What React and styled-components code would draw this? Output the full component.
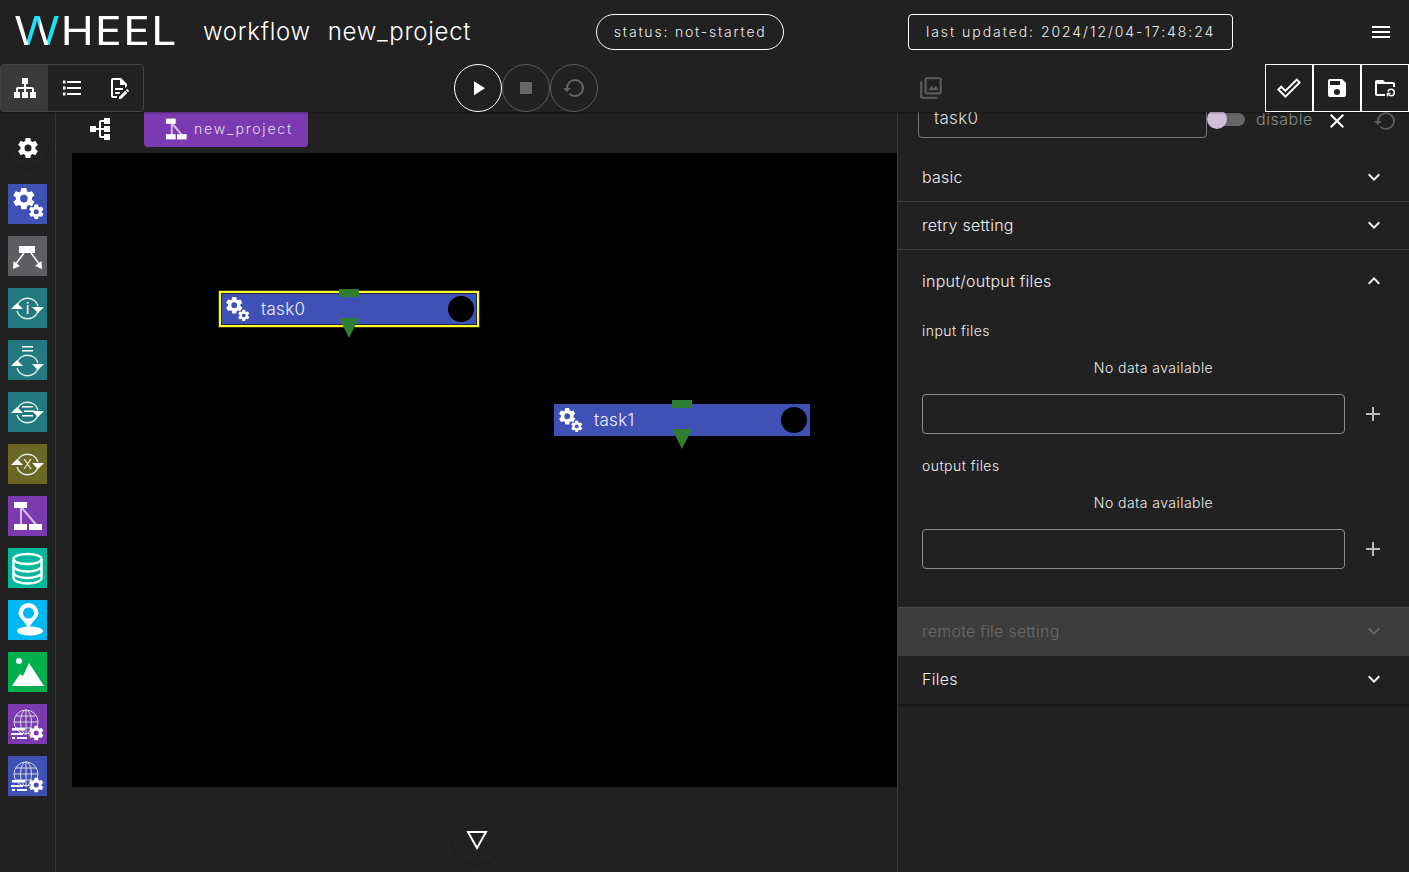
import React from 'react';
import styled, { createGlobalStyle } from 'styled-components';

const paths = {
  sitemap: 'M9,2V8H11V11H5C3.89,11 3,11.89 3,13V16H1V22H7V16H5V13H11V16H9V22H15V16H13V13H19V16H17V22H23V16H21V13C21,11.89 20.11,11 19,11H13V8H15V2H9Z',
  list: 'M7,5H21V7H7V5M7,13V11H21V13H7M3,4.5H5.5V7.5H3V4.5M3,10.5H5.5V13.5H3V10.5M7,19V17H21V19H7M3,16.5H5.5V19.5H3V16.5Z',
  fileEdit: 'M8,12H16V14H8V12M10,20H6V4H13V9H18V12.1L20,10.1V8L14,2H6A2,2 0 0,0 4,4V20A2,2 0 0,0 6,22H10V20M8,18H12.1L13,17.1V16H8V18M20.2,13C20.3,13 20.5,13.1 20.6,13.2L21.9,14.5C22.1,14.7 22.1,15.1 21.9,15.3L20.9,16.3L18.8,14.2L19.8,13.2C19.9,13.1 20,13 20.2,13M20.2,16.9L14.1,23H12V20.9L18.1,14.8L20.2,16.9Z',
  play: 'M8,5.14V19.14L19,12.14L8,5.14Z',
  stop: 'M18,18H6V6H18V18Z',
  restore: 'M13,3A9,9 0 0,0 4,12H1L4.89,15.89L4.96,16.03L9,12H6A7,7 0 0,1 13,5A7,7 0 0,1 20,12A7,7 0 0,1 13,19C11.07,19 9.32,18.21 8.06,16.94L6.64,18.36C8.27,20 10.5,21 13,21A9,9 0 0,0 22,12A9,9 0 0,0 13,3Z',
  save: 'M15,9H5V5H15M12,19A3,3 0 0,1 9,16A3,3 0 0,1 12,13A3,3 0 0,1 15,16A3,3 0 0,1 12,19M17,3H5C3.89,3 3,3.9 3,5V19A2,2 0 0,0 5,21H19A2,2 0 0,0 21,19V7L17,3Z',
  images: 'M20 4v12H8V4h12m0-2H8a2 2 0 0 0-2 2v12c0 1.1.9 2 2 2h12a2 2 0 0 0 2-2V4a2 2 0 0 0-2-2zM2 6v14c0 1.1.9 2 2 2h14v-2H4V6H2zM9.5 14l3-4 2 2.5 2-2.5 2.5 4z',
  checkOutline: 'M19.78,2.2L24,6.42L8.44,22L0,13.55L4.22,9.33L8.44,13.55L19.78,2.2M19.78,5L8.44,16.36L4.22,12.17L2.81,13.55L8.44,19.17L21.19,6.42L19.78,5Z',
  folderRefresh: 'M10 4H4C2.89 4 2 4.89 2 6V18C2 19.1 2.9 20 4 20H12V18H4V8H20V11H22V8C22 6.89 21.1 6 20 6H12L10 4ZM18 12.5A4 4 0 0 0 14.2 15.3L15.7 15.8A2.5 2.5 0 0 1 18 14A2.5 2.5 0 0 1 20.5 16.5A2.5 2.5 0 0 1 18 19A2.5 2.5 0 0 1 16 18H17.5V16.8H13.8V20.5H15V19.1A4 4 0 0 0 18 20.5A4 4 0 0 0 22 16.5A4 4 0 0 0 18 12.5Z',
  close: 'M19,6.41L17.59,5L12,10.59L6.41,5L5,6.41L10.59,12L5,17.59L6.41,19L12,13.41L17.59,19L19,17.59L13.41,12L19,6.41Z',
  down: 'M7.41,8.58L12,13.17L16.59,8.58L18,10L12,16L6,10L7.41,8.58Z',
  up: 'M7.41,15.41L12,10.83L16.59,15.41L18,14L12,8L6,14L7.41,15.41Z',
  plus: 'M19,13H13V19H11V13H5V11H11V5H13V11H19V13Z',
  menu: 'M3,6H21V8H3V6M3,11H21V13H3V11M3,16H21V18H3V16Z',
  cog: 'M12,15.5A3.5,3.5 0 0,1 8.5,12A3.5,3.5 0 0,1 12,8.5A3.5,3.5 0 0,1 15.5,12A3.5,3.5 0 0,1 12,15.5M19.43,12.97C19.47,12.65 19.5,12.33 19.5,12C19.5,11.67 19.47,11.34 19.43,11L21.54,9.37C21.73,9.22 21.78,8.95 21.66,8.73L19.66,5.27C19.54,5.05 19.27,4.96 19.05,5.05L16.56,6.05C16.04,5.66 15.5,5.32 14.87,5.07L14.5,2.42C14.46,2.18 14.25,2 14,2H10C9.75,2 9.54,2.18 9.5,2.42L9.13,5.07C8.5,5.32 7.96,5.66 7.44,6.05L4.95,5.05C4.73,4.96 4.46,5.05 4.34,5.27L2.34,8.73C2.21,8.95 2.27,9.22 2.46,9.37L4.57,11C4.53,11.34 4.5,11.67 4.5,12C4.5,12.33 4.53,12.65 4.57,12.97L2.46,14.63C2.27,14.78 2.21,15.05 2.34,15.27L4.34,18.73C4.46,18.95 4.73,19.03 4.95,18.95L7.44,17.94C7.96,18.34 8.5,18.68 9.13,18.93L9.5,21.58C9.54,21.82 9.75,22 10,22H14C14.25,22 14.46,21.82 14.5,21.58L14.87,18.93C15.5,18.67 16.04,18.34 16.56,17.94L19.05,18.95C19.27,19.03 19.54,18.95 19.66,18.73L21.66,15.27C21.78,15.05 21.73,14.78 21.54,14.63L19.43,12.97Z',
};

const GlobalStyle = createGlobalStyle`
  html, body {
    margin: 0;
    background: #212121;
    overflow: hidden;
  }
  * {
    box-sizing: border-box;
  }
`;

const Page = styled.div`
  width: 1409px;
  height: 872px;
  display: flex;
  flex-direction: column;
  background: #212121;
  color: #fff;
  font-family: Inter, "Liberation Sans", sans-serif;
  overflow: hidden;
`;

const Header = styled.header`
  height: 64px;
  display: flex;
  align-items: center;
  padding-left: 14px;
`;

const Logo = styled.div`
  width: 160px;
  padding-bottom: 3px;
  font-size: 39px;
  font-weight: 400;
  letter-spacing: 1.2px;
  line-height: 1;
  white-space: nowrap;
  transform: scaleX(1.14);
  transform-origin: left;
`;

const LogoW = styled.span`
  display: inline-block;
  transform: scaleX(1.05);
  transform-origin: left;
  margin-right: 2.5px;
  letter-spacing: 0;
  color: transparent;
  background: linear-gradient(90deg, #fff 0 30%, #19e3f5 30% 56%, #fff 56% 74%, #19e3f5 74% 100%);
  -webkit-background-clip: text;
  background-clip: text;
`;

const Title = styled.span`
  font-size: 24px;
  font-weight: 300;
  letter-spacing: 0.7px;
  padding-bottom: 1px;
  margin-left: ${(p) => p.$gap}px;
`;

const Chip = styled.div`
  height: 36px;
  display: flex;
  align-items: center;
  justify-content: center;
  width: ${(p) => p.$width}px;
  margin-left: ${(p) => p.$gap}px;
  padding-bottom: 1px;
  border: 1px solid #fff;
  border-radius: ${(p) => p.$radius}px;
  font-size: 14px;
  font-weight: 300;
  letter-spacing: ${(p) => p.$spacing}px;
  color: #eee;
`;

const MenuButton = styled.div`
  margin-left: 136px;
  display: flex;
`;

const Toolbar = styled.div`
  height: 48px;
  display: flex;
  align-items: center;
  position: relative;
  z-index: 2;
  background: #212121;
  box-shadow: 0 1px 2px rgba(0, 0, 0, 0.35);
`;

const ViewGroup = styled.div`
  display: flex;
  width: 144px;
  height: 48px;
  border: 1px solid #444;
  border-radius: 4px;
  overflow: hidden;
`;

const ViewButton = styled.div`
  flex: 1;
  display: flex;
  align-items: center;
  justify-content: center;
  background: ${(p) => (p.$active ? '#3a3a3a' : 'transparent')};
`;

const RunGroup = styled.div`
  display: flex;
  margin-left: 310px;
  border-radius: 24px;
  box-shadow: 0 1px 2px rgba(0, 0, 0, 0.4);
`;

const RunButton = styled.div`
  width: 48px;
  height: 48px;
  display: flex;
  align-items: center;
  justify-content: center;
  border-radius: 50%;
  border: 1px solid ${(p) => (p.$enabled ? '#fff' : '#5a5a5a')};
  color: ${(p) => (p.$enabled ? '#fff' : '#666')};
`;

const GalleryButton = styled.div`
  display: flex;
  margin-left: 320px;
  color: #5c5c5c;
`;

const SaveGroup = styled.div`
  display: flex;
  margin-left: auto;
`;

const SaveButton = styled.div`
  width: 48px;
  height: 48px;
  display: flex;
  align-items: center;
  justify-content: center;
  border: 1px solid #fff;
`;

const Main = styled.main`
  flex: 1;
  display: flex;
  min-height: 0;
`;

const Sidebar = styled.aside`
  width: 56px;
  flex: none;
  display: flex;
  flex-direction: column;
  align-items: flex-start;
  gap: 12px;
  padding: 16px 0 0 8px;
  border-right: 1px solid #3a3a3a;
`;

const SettingsButton = styled.div`
  width: 40px;
  height: 40px;
  margin-bottom: 4px;
  display: flex;
  align-items: center;
  justify-content: center;
  border-radius: 50%;
  box-shadow: 0 1px 3px rgba(0, 0, 0, 0.2);
`;

const Tile = styled.div`
  width: 39px;
  height: 40px;
  display: flex;
  background: ${(p) => p.$bg};
`;

const Center = styled.section`
  width: 841px;
  flex: none;
  display: flex;
  flex-direction: column;
`;

const Crumbs = styled.div`
  height: 41px;
  display: flex;
  padding-left: 32px;
`;

const TreeButton = styled.div`
  width: 24px;
  height: 34px;
  display: flex;
  align-items: center;
`;

const CrumbButton = styled.div`
  width: 164px;
  height: 35px;
  margin-left: 32px;
  display: flex;
  align-items: center;
  padding: 0 0 2px 19px;
  gap: 5px;
  background: #7b3ab0;
  border-radius: 0 0 4px 4px;
  font-size: 14px;
  font-weight: 300;
  letter-spacing: 1.8px;
  color: #e6dcee;
`;

const Canvas = styled.div`
  position: relative;
  width: 825px;
  height: 634px;
  margin-left: 16px;
  background: #000;
`;

const Node = styled.div`
  position: absolute;
  left: ${(p) => p.$x}px;
  top: ${(p) => p.$y}px;
  width: 256px;
  height: 32px;
  display: flex;
  align-items: center;
  padding-left: 1px;
  background: #3f51b5;
  outline: ${(p) => (p.$selected ? '2px solid #ffff2a' : 'none')};
  box-shadow: ${(p) => (p.$selected ? '0 0 0 3px #33330c, 0 0 0 1px #1c2452 inset' : 'none')};
`;

const NodeLabel = styled.span`
  margin-left: 9px;
  font-size: 17px;
  font-weight: 300;
  letter-spacing: 0.3px;
  color: #eef;
`;

const PortTop = styled.div`
  position: absolute;
  left: 118px;
  top: -4px;
  width: 20px;
  height: 8px;
  background: #2e7d32;
`;

const PortBottom = styled.div`
  position: absolute;
  left: 118px;
  top: 25px;
  width: 0;
  height: 0;
  border-left: 10px solid transparent;
  border-right: 10px solid transparent;
  border-top: 20px solid #2e7d32;
`;

const Status = styled.div`
  position: absolute;
  right: 3px;
  top: 3px;
  width: 26px;
  height: 26px;
  border-radius: 50%;
  background: #000;
`;

const Footer = styled.div`
  flex: 1;
  display: flex;
  justify-content: center;
  padding-top: 29px;
`;

const CollapseButton = styled.div`
  width: 48px;
  height: 48px;
  display: flex;
  align-items: center;
  justify-content: center;
  border-radius: 50%;
  box-shadow: 0 1px 3px rgba(0, 0, 0, 0.2);
`;

const Panel = styled.section`
  flex: 1;
  display: flex;
  flex-direction: column;
  overflow: hidden;
  border-left: 1px solid #3a3a3a;
`;

const NameRow = styled.div`
  height: 41px;
  flex: none;
  display: flex;
  align-items: flex-end;
  padding: 0 0 15px 20px;
`;

const NameInput = styled.input`
  width: 289px;
  height: 40px;
  flex: none;
  padding: 0 15px;
  border: 1px solid #777;
  border-radius: 4px;
  background: transparent;
  color: #ddd;
  font: 300 17px Inter, "Liberation Sans", sans-serif;
  letter-spacing: 0.3px;
`;

const Switch = styled.div`
  position: relative;
  width: 37px;
  height: 13px;
  margin: 0 0 12px 1px;
  flex: none;
  border-radius: 7px;
  background: #666;
`;

const SwitchThumb = styled.div`
  position: absolute;
  left: -1px;
  top: -4px;
  width: 20px;
  height: 20px;
  border-radius: 50%;
  background: #cfc0d9;
`;

const DisableLabel = styled.span`
  margin: 0 0 9px 11px;
  color: #8a8a8a;
  font-size: 16px;
  font-weight: 300;
  letter-spacing: 0.55px;
`;

const RowIcon = styled.div`
  display: flex;
  margin: 0 0 5px ${(p) => p.$gap}px;
  color: ${(p) => p.$color};
`;

const AccordionHeader = styled.div`
  height: ${(p) => p.$height || 48}px;
  flex: none;
  display: flex;
  align-items: center;
  justify-content: space-between;
  padding: 0 23px ${(p) => p.$lift || 0}px 24px;
  font-size: 16px;
  font-weight: 300;
  letter-spacing: 0.25px;
  color: ${(p) => (p.$disabled ? '#6b6b6b' : '#eee')};
  background: ${(p) => (p.$disabled ? '#3c3c3c' : 'transparent')};
  border-bottom: ${(p) => (p.$divider ? '1px solid #3a3a3a' : 'none')};
  box-shadow: ${(p) => (p.$last ? '0 2px 2px rgba(0, 0, 0, 0.3)' : 'none')};
`;

const AccordionBody = styled.div`
  flex: none;
  height: 296px;
  padding: 9px 24px 0;
  border-bottom: 1px solid #4a4a4a;
`;

const FileSection = styled.div`
  margin-bottom: 22px;
`;

const SectionLabel = styled.div`
  height: 20px;
  line-height: 20px;
  font-size: 14px;
  font-weight: 300;
  letter-spacing: 0.45px;
  color: #eee;
`;

const NoData = styled.div`
  height: 20px;
  margin: 17px 0 16px;
  line-height: 20px;
  text-align: center;
  font-size: 14px;
  font-weight: 300;
  letter-spacing: 0.45px;
  color: #eee;
`;

const FieldRow = styled.div`
  display: flex;
  align-items: center;
  gap: 16px;
`;

const FileInput = styled.input`
  flex: 1;
  height: 40px;
  min-width: 0;
  border: 1px solid #8a8a8a;
  border-radius: 4px;
  background: transparent;
`;

const AddButton = styled.div`
  display: flex;
  color: #bbb;
`;

const Icon = ({ d, size = 24, color = 'currentColor', rotate }) => (
  <svg
    width={size}
    height={size}
    viewBox="0 0 24 24"
    fill={color}
    transform={rotate ? `rotate(${rotate})` : undefined}
  >
    <path d={d} />
  </svg>
);

const Gears = ({ size = 39 }) => (
  <svg width={size} height={size} viewBox="0 0 39 40" fill="#fff">
    <path d={paths.cog} transform="translate(2.6 1.8) scale(1.1)" />
    <path d={paths.cog} transform="translate(19.5 19.5) scale(0.75)" />
  </svg>
);

const TileSvg = ({ children }) => (
  <svg width="39" height="40" viewBox="0 0 39 40" fill="#fff" stroke="none">
    {children}
  </svg>
);

const LoopArrows = ({ cy = 20 }) => (
  <g>
    <path
      d={`M9 ${cy - 2} A11 11 0 0 1 30 ${cy - 2} M30 ${cy + 3} A11 11 0 0 1 9 ${cy + 3}`}
      fill="none"
      stroke="#e4eeee"
      strokeWidth="1.4"
    />
    <path d={`M3 ${cy + 1} L9 ${cy - 5} L15 ${cy + 1} Z`} />
    <path d={`M24 ${cy - 1} L36 ${cy - 1} L30 ${cy + 5} Z`} />
  </g>
);

const GlobeCog = () => (
  <TileSvg>
    <g fill="none" stroke="#d8d8e8" strokeWidth="1">
      <circle cx="18" cy="18" r="12" />
      <ellipse cx="18" cy="18" rx="5.5" ry="12" />
      <path d="M6 18H30M8 12H28M8 24H24M18 6V30" />
    </g>
    <path d="M4 24H17V26.500H4ZM3 29H15V31H3ZM9 33H19V35H9ZM4 33H7V35H4Z" />
    <path d={paths.cog} transform="translate(19.6 20.4) scale(0.72)" />
  </TileSvg>
);

const paletteItems = [
  { bg: '#3f51b5', art: <Gears /> },
  {
    bg: '#5f5d62',
    art: (
      <TileSvg>
        <rect x="11" y="10" width="16" height="7" />
        <path d="M16 17L7 29M23 17L32 29" stroke="#fff" strokeWidth="1.5" />
        <path d="M5 33L5.5 25L12 30ZM34 33L33.5 25L27 30Z" />
      </TileSvg>
    ),
  },
  {
    bg: '#227a80',
    art: (
      <TileSvg>
        <LoopArrows />
        <text x="19.5" y="26" fontSize="15" textAnchor="middle" fontFamily="Inter, sans-serif">i</text>
      </TileSvg>
    ),
  },
  {
    bg: '#227a80',
    art: (
      <TileSvg>
        <path d="M14 6H25V7.5H14ZM14 10H25V11.5H14Z" />
        <LoopArrows cy={25} />
      </TileSvg>
    ),
  },
  {
    bg: '#227a80',
    art: (
      <TileSvg>
        <LoopArrows />
        <path d="M14 14H25V15.5H14ZM16 18.5H27V20H16ZM14 23H25V24.5H14Z" />
      </TileSvg>
    ),
  },
  {
    bg: '#6b6825',
    art: (
      <TileSvg>
        <LoopArrows />
        <text x="19.5" y="25" fontSize="13" fontWeight="300" textAnchor="middle" fontFamily="Inter, sans-serif">X</text>
      </TileSvg>
    ),
  },
  {
    bg: '#7b3ab0',
    art: (
      <TileSvg>
        <path d="M13 12V31M14 12L30 31" stroke="#d9bfe8" strokeWidth="2" fill="none" />
        <rect x="6" y="6" width="13" height="6" />
        <rect x="6" y="28" width="13" height="6" />
        <rect x="21" y="28" width="13" height="6" />
      </TileSvg>
    ),
  },
  {
    bg: '#00b89c',
    art: (
      <TileSvg>
        <g fill="none" stroke="#fff" strokeWidth="2.4">
          <ellipse cx="19.5" cy="11" rx="14" ry="5" />
          <path d="M5.5 11V30C5.5 33 12 35.5 19.5 35.5S33.5 33 33.5 30V11" />
          <path d="M5.5 18C5.5 21 12 23.5 19.5 23.5S33.5 21 33.5 18" />
          <path d="M5.5 24.5C5.5 27.5 12 30 19.5 30S33.5 27.5 33.5 24.5" />
        </g>
      </TileSvg>
    ),
  },
  {
    bg: '#00b8f0',
    art: (
      <TileSvg>
        <path
          fillRule="evenodd"
          d="M20.500 3A10 10 0 0 1 30.500 13C30.500 18 24 21 21 28H20C17 21 10.500 18 10.500 13A10 10 0 0 1 20.500 3ZM20.500 7.500A5.500 5.500 0 1 0 20.500 18.500A5.500 5.500 0 1 0 20.500 7.500Z"
        />
        <ellipse cx="22" cy="31" rx="13" ry="4.5" />
      </TileSvg>
    ),
  },
  {
    bg: '#00b04f',
    art: (
      <TileSvg>
        <circle cx="11" cy="9" r="3" />
        <path d="M4 34L12 22L15 24L21 11L36 34Z" />
      </TileSvg>
    ),
  },
  { bg: '#7b3ab0', art: <GlobeCog /> },
  { bg: '#3f51b5', art: <GlobeCog /> },
];

const nodes = [
  { name: 'task0', x: 149, y: 140, selected: true },
  { name: 'task1', x: 482, y: 251 },
];

const App = () => (
  <Page>
    <GlobalStyle />
    <Header>
      <Logo>
        <LogoW>W</LogoW>HEEL
      </Logo>
      <Title $gap={29}>workflow</Title>
      <Title $gap={17}>new_project</Title>
      <Chip $width={188} $radius={18} $gap={125} $spacing={1.8}>status: not-started</Chip>
      <Chip $width={325} $radius={4} $gap={124} $spacing={1.95}>last updated: 2024/12/04-17:48:24</Chip>
      <MenuButton>
        <Icon d={paths.menu} />
      </MenuButton>
    </Header>
    <Toolbar>
      <ViewGroup>
        <ViewButton $active>
          <Icon d={paths.sitemap} />
        </ViewButton>
        <ViewButton>
          <Icon d={paths.list} />
        </ViewButton>
        <ViewButton>
          <Icon d={paths.fileEdit} />
        </ViewButton>
      </ViewGroup>
      <RunGroup>
        <RunButton $enabled>
          <Icon d={paths.play} />
        </RunButton>
        <RunButton>
          <Icon d={paths.stop} />
        </RunButton>
        <RunButton>
          <Icon d={paths.restore} />
        </RunButton>
      </RunGroup>
      <GalleryButton>
        <Icon d={paths.images} size={26} />
      </GalleryButton>
      <SaveGroup>
        <SaveButton>
          <Icon d={paths.checkOutline} />
        </SaveButton>
        <SaveButton>
          <Icon d={paths.save} />
        </SaveButton>
        <SaveButton>
          <Icon d={paths.folderRefresh} />
        </SaveButton>
      </SaveGroup>
    </Toolbar>
    <Main>
      <Sidebar>
        <SettingsButton>
          <Icon d={paths.cog} />
        </SettingsButton>
        {paletteItems.map((item, i) => (
          <Tile key={i} $bg={item.bg}>
            {item.art}
          </Tile>
        ))}
      </Sidebar>
      <Center>
        <Crumbs>
          <TreeButton>
            <Icon d={paths.sitemap} rotate={-90} />
          </TreeButton>
          <CrumbButton>
            <svg width="26" height="26" viewBox="0 0 39 40" fill="#fff">
              <path d="M13 12V31M14 12L30 31" stroke="#d9bfe8" strokeWidth="3" fill="none" />
              <rect x="4" y="4" width="15" height="8" />
              <rect x="4" y="28" width="15" height="8" />
              <rect x="21" y="28" width="15" height="8" />
            </svg>
            new_project
          </CrumbButton>
        </Crumbs>
        <Canvas>
          {nodes.map((node) => (
            <Node key={node.name} $x={node.x} $y={node.y} $selected={node.selected}>
              <Gears size={30} />
              <NodeLabel>{node.name}</NodeLabel>
              <PortTop />
              <PortBottom />
              <Status />
            </Node>
          ))}
        </Canvas>
        <Footer>
          <CollapseButton>
            <svg width="24" height="24" viewBox="0 0 24 24" fill="none" stroke="#fff" strokeWidth="2">
              <path d="M3 4H21L12 20Z" />
            </svg>
          </CollapseButton>
        </Footer>
      </Center>
      <Panel>
        <NameRow>
          <NameInput readOnly value="task0" />
          <Switch>
            <SwitchThumb />
          </Switch>
          <DisableLabel>disable</DisableLabel>
          <RowIcon $gap={12} $color="#fff">
            <Icon d={paths.close} />
          </RowIcon>
          <RowIcon $gap={24} $color="#5c5c5c">
            <Icon d={paths.restore} />
          </RowIcon>
        </NameRow>
        <AccordionHeader $height={49} $lift={1} $divider>
          basic
          <Icon d={paths.down} />
        </AccordionHeader>
        <AccordionHeader $lift={1} $divider>
          retry setting
          <Icon d={paths.down} />
        </AccordionHeader>
        <AccordionHeader $height={62}>
          input/output files
          <Icon d={paths.up} />
        </AccordionHeader>
        <AccordionBody>
          <FileSection>
            <SectionLabel>input files</SectionLabel>
            <NoData>No data available</NoData>
            <FieldRow>
              <FileInput readOnly />
              <AddButton>
                <Icon d={paths.plus} />
              </AddButton>
            </FieldRow>
          </FileSection>
          <FileSection>
            <SectionLabel>output files</SectionLabel>
            <NoData>No data available</NoData>
            <FieldRow>
              <FileInput readOnly />
              <AddButton>
                <Icon d={paths.plus} />
              </AddButton>
            </FieldRow>
          </FileSection>
        </AccordionBody>
        <AccordionHeader $lift={2} $disabled>
          remote file setting
          <Icon d={paths.down} color="#666" />
        </AccordionHeader>
        <AccordionHeader $lift={2} $last>
          Files
          <Icon d={paths.down} />
        </AccordionHeader>
      </Panel>
    </Main>
  </Page>
);

export default App;
